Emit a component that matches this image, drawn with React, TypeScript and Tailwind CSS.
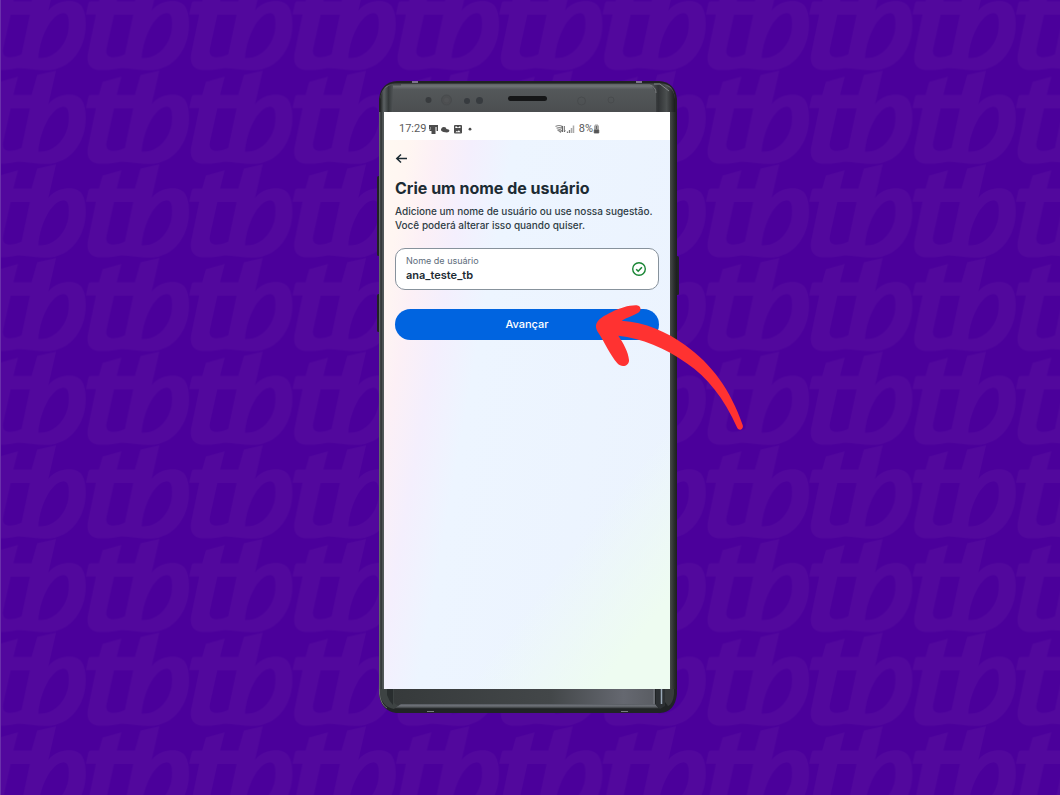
import { useState } from "react";

function PatternBackdrop() {
  return (
    <svg aria-hidden="true" className="absolute inset-0 h-full w-full">
      <defs>
        <pattern
          id="brand"
          patternUnits="userSpaceOnUse"
          width="310"
          height="281"
          patternTransform="translate(85.8 70.5) scale(0.33333)"
        >
          <path
            transform="translate(-17.5 -31.5)"
            fill="#52089d"
            fillRule="evenodd"
            d="M18 144 L25 112 Q26 105 34 105 L57 105 L68 66 L124 50 L110 105 L165 105 L182 45 L238 32 L215 133 C235 108 262 103 285 104 C315 107 328 130 327 178 C326 245 285 310 210 312 C180 312 150 306 125 305 C100 310 70 313 50 310 C25 305 20 285 24 262 L48 144 Z M102 145 L160 145 L135 264 C120 272 100 275 92 272 C80 269 77 260 80 245 Z M185 275 C190 210 225 142 260 140 C275 140 278 155 276 185 C274 225 240 280 185 275 Z"
          />
        </pattern>
      </defs>
      <rect width="100%" height="100%" fill="url(#brand)" />
      <rect width="1" height="100%" fill="#6a30ab" />
    </svg>
  );
}

function PhoneTop() {
  return (
    <svg aria-hidden="true" viewBox="0 0 298 31" className="block w-full">
      <defs>
        <linearGradient id="topGlass" x1="0" y1="0" x2="0" y2="1">
          <stop offset="0" stopColor="#2e3132" />
          <stop offset="0.12" stopColor="#6c7072" />
          <stop offset="0.22" stopColor="#54585a" />
          <stop offset="1" stopColor="#4b4e50" />
        </linearGradient>
        <linearGradient id="topLeft" x1="0" x2="1">
          <stop offset="0" stopColor="#1b1d1d" />
          <stop offset="0.3" stopColor="#5b6163" />
          <stop offset="0.65" stopColor="#34393a" />
          <stop offset="1" stopColor="#505456" />
        </linearGradient>
        <linearGradient id="topRight" x1="0" x2="1">
          <stop offset="0" stopColor="#56595b" />
          <stop offset="0.3" stopColor="#303335" />
          <stop offset="0.65" stopColor="#4b4f50" />
          <stop offset="1" stopColor="#1b1d1d" />
        </linearGradient>
      </defs>
      <path d="M0 31V18Q2 1 18 0H280Q296 1 298 18V31Z" fill="#202223" />
      <path d="M1 31V18Q3 3 16 2H282Q295 3 296 18V31Z" fill="url(#topGlass)" />
      <path d="M1 31V18Q3 6 14 3V31Z" fill="url(#topLeft)" />
      <path d="M277 31V12L272 4L282 3Q295 5 296 18V31Z" fill="url(#topRight)" />
      <path d="M22 4H271Q277 6 277 12" fill="none" stroke="#7b7e80" strokeWidth="1" />
      <path d="M275 3H281L290 10" fill="none" stroke="#85888b" strokeWidth="1" />
      <path d="M33 1H39M257 1H263" stroke="#9a8fac" strokeWidth="1.5" />
      <circle cx="49.500" cy="19" r="3" fill="#383b3e" />
      <circle cx="67.500" cy="19" r="5" fill="#4d4f51" stroke="#484b4d" />
      <circle cx="67.500" cy="19" r="2.500" fill="#515355" />
      <circle cx="88" cy="20" r="3" fill="#373b3f" />
      <circle cx="100.500" cy="19.500" r="3.500" fill="#373b3f" />
      <rect x="129" y="15" width="39" height="5" rx="2.500" fill="#151617" />
      <circle cx="202.500" cy="20" r="4" fill="none" stroke="#484b4d" />
      <circle cx="232" cy="19" r="3" fill="none" stroke="#484b4d" />
    </svg>
  );
}

function PhoneBottom() {
  return (
    <svg aria-hidden="true" viewBox="0 0 298 24" className="block w-full">
      <defs>
        <linearGradient id="botGlass" x1="0" x2="1">
          <stop offset="0" stopColor="#363a3b" />
          <stop offset="0.6" stopColor="#434749" />
          <stop offset="0.88" stopColor="#656870" />
          <stop offset="1" stopColor="#5a5d63" />
        </linearGradient>
        <linearGradient id="botEdge" x1="0" x2="0" y1="0" y2="1">
          <stop offset="0" stopColor="#555960" />
          <stop offset="0.4" stopColor="#6f7379" />
          <stop offset="1" stopColor="#303335" />
        </linearGradient>
      </defs>
      <path d="M0 0H298V5Q296 23 281 24H17Q2 22 0 5Z" fill="#202425" />
      <path d="M1 0V5Q3 18 15 20L21 15V0Z" fill="#3d4343" />
      <path d="M0.500 0V5Q2 16 8 19" fill="none" stroke="#696f70" />
      <path d="M8 0H14V16Q10 12 8 6Z" fill="#292e2f" />
      <path d="M15 0H276V16H22Q18 17 15 14Z" fill="url(#botGlass)" />
      <path d="M22 15H276L280 19.500H15Z" fill="url(#botEdge)" />
      <path d="M275 0V15" stroke="#7b7e84" />
      <path d="M277 0H286V17L281 20L277 16Z" fill="#2c3033" />
      <path d="M282.500 0V15" stroke="#9aa9b8" strokeWidth="1.500" />
      <path d="M286 0H295V5Q294 15 289 17L286 13Z" fill="#373b3c" />
      <path d="M48 22.500H55M242 22.500H249" stroke="#777b7e" strokeWidth="1.200" />
    </svg>
  );
}

function StatusBar() {
  return (
    <div className="flex h-7 items-center bg-white pt-1.5 pr-[70px] pl-[15px] font-[Roboto,sans-serif] text-[11px] leading-4 text-[#5a5a5a]">
      <span>17:29</span>
      <svg aria-hidden="true" viewBox="0 0 50 12" className="ml-0.5 h-3 w-[50px]" fill="#4c4c4c">
        <path d="M1 2H10V8H9V4H7.500V11H3.500V8H1.500V6H1Z" />
        <path d="M2.500 4V7M8.500 4V8" stroke="#999" strokeWidth="0.800" />
        <path d="M15.500 9Q12.800 8.500 13 6.300Q13.800 3.800 16 4Q18.200 4.200 18.500 6Q21.300 6.200 21.500 7.800Q21 9.500 19 9.500Z" />
        <path
          fillRule="evenodd"
          d="M26.500 2H33Q34 2 34 3V9.500Q34 10.500 33 10.500H27Q26 10.500 26 9.500V3ZM27.300 3.500V5H32.500V3.500H31V4.300H29V3.500ZM27.500 9.300H32.500L30.900 7.300L29.600 8.600L28.600 8Z"
        />
        <circle cx="42" cy="6.200" r="1.400" />
      </svg>
      <svg aria-hidden="true" viewBox="0 0 22 12" className="ml-auto h-3 w-[22px]">
        <path d="M0.500 3.500Q4 1.500 7.500 3.500M1.500 5.300Q4.500 3.800 7 5.300M3 7Q5 6 6.500 7.500L5.500 9Z" fill="none" stroke="#888" strokeWidth="1.200" />
        <path d="M7.500 3V9M6.500 4.500L7.500 3M9.300 3V9L10.300 7.500" fill="none" stroke="#666" />
        <path d="M12.500 10V8.500M14.500 10V7" stroke="#777" strokeWidth="1.300" />
        <path d="M16.500 10V5M18.500 10V2.500" stroke="#aaa" strokeWidth="1.500" />
      </svg>
      <span className="ml-0.5">8%</span>
      <svg aria-hidden="true" viewBox="0 0 7 12" className="h-3 w-[7px]">
        <path d="M2 1.500H5V2.500H6V7H1V2.500H2Z" fill="#aaa" />
        <path d="M3.500 3V6M1.200 7H5.800V10H1.200Z" fill="#555" stroke="#555" strokeWidth="0.800" />
      </svg>
    </div>
  );
}

function PointerArrow() {
  return (
    <svg
      aria-hidden="true"
      viewBox="78 45 444 378"
      className="pointer-events-none absolute top-[224px] left-[217px] h-[126px] w-[148px]"
    >
      <path
        fill="#ff3231"
        d="M78 106C80 88 105 76 125 66C150 54 178 45 200 46C214 48 215 62 205 68C190 77 170 82 155 92C225 96 290 125 345 165C425 222 482 300 518 405C522 418 508 424 502 414C462 325 412 262 350 220C285 173 215 145 145 137C160 160 175 185 177 210C178 228 155 234 142 220C120 195 105 158 82 124Q77 115 78 106Z"
      />
    </svg>
  );
}

export default function App() {
  const [username, setUsername] = useState("ana_teste_tb");

  return (
    <main className="relative flex min-h-screen items-center justify-center overflow-hidden bg-[#4b009b] pr-1 pb-0.5 font-[Inter,sans-serif] text-[#1c2b33]">
      <PatternBackdrop />
      <div className="relative w-[298px]">
        <span className="absolute top-[95px] -left-0.5 h-20 w-[3px] rounded-sm bg-[#202224]" />
        <span className="absolute top-[213px] -left-0.5 h-[38px] w-[3px] rounded-sm bg-[#202224]" />
        <span className="absolute top-[175px] -right-0.5 h-[39px] w-[3px] rounded-sm bg-[#202224]" />
        <div className="relative">
          <PhoneTop />
          <div className="bg-[linear-gradient(90deg,#747a7b_0,#2b2f30_2px,#555b5c_4px,#454a4b_6px,#454a4b_50%,#474b4a_calc(100%-7px),#2b2e2e_calc(100%-3px),#1c1e1e_100%)] pr-[7px] pl-[5px]">
            <StatusBar />
            <section className="min-h-[549px] bg-[linear-gradient(128deg,transparent_71%,#eefcf1_90%),linear-gradient(100deg,#fff9f2_0%,#fff6f2_7%,#fcf0f6_14%,#f4effd_23%,#edf5ff_34%,#ebf3fe_100%)] px-[11px] pt-3">
              <button type="button" aria-label="Voltar" className="block h-3 w-3">
                <svg viewBox="0 0 12 12" className="h-3 w-3" fill="none" stroke="#1c2b33" strokeWidth="1.500">
                  <path d="M12.500 6.500H1.800M6 2.500L1.800 6.500L6 10.500" />
                </svg>
              </button>
              <h1 className="mt-3 text-base leading-6 font-bold">Crie um nome de usuário</h1>
              <p className="mt-1 text-[10px] leading-[14px] font-medium whitespace-nowrap text-[#2f3d45]">
                Adicione um nome de usuário ou use nossa sugestão.
                <br />
                Você poderá alterar isso quando quiser.
              </p>
              <div className="mt-4 flex h-[42px] items-center rounded-[10px] border border-[#87929c] bg-white pr-3 pl-2.5">
                <div className="min-w-0 flex-1">
                  <label htmlFor="username" className="block text-[9px] leading-3 text-[#5d6c7b]">
                    Nome de usuário
                  </label>
                  <input
                    id="username"
                    value={username}
                    onChange={(e) => setUsername(e.target.value)}
                    className="block h-4 w-full bg-transparent text-[11px] leading-4 font-semibold outline-none"
                  />
                </div>
                <svg aria-hidden="true" viewBox="0 0 14 14" className="h-3.5 w-3.5" fill="none" stroke="#198534">
                  <circle cx="7" cy="7" r="6.300" strokeWidth="1.400" />
                  <path d="M4.200 7.200L6.200 9.200L9.900 5.200" strokeWidth="1.600" />
                </svg>
              </div>
              <button
                type="button"
                className="mt-[19px] block h-[31px] w-full rounded-full bg-[#0064e0] text-[11px] leading-4 font-medium text-white"
              >
                Avançar
              </button>
            </section>
          </div>
          <PhoneBottom />
        </div>
        <PointerArrow />
      </div>
    </main>
  );
}
